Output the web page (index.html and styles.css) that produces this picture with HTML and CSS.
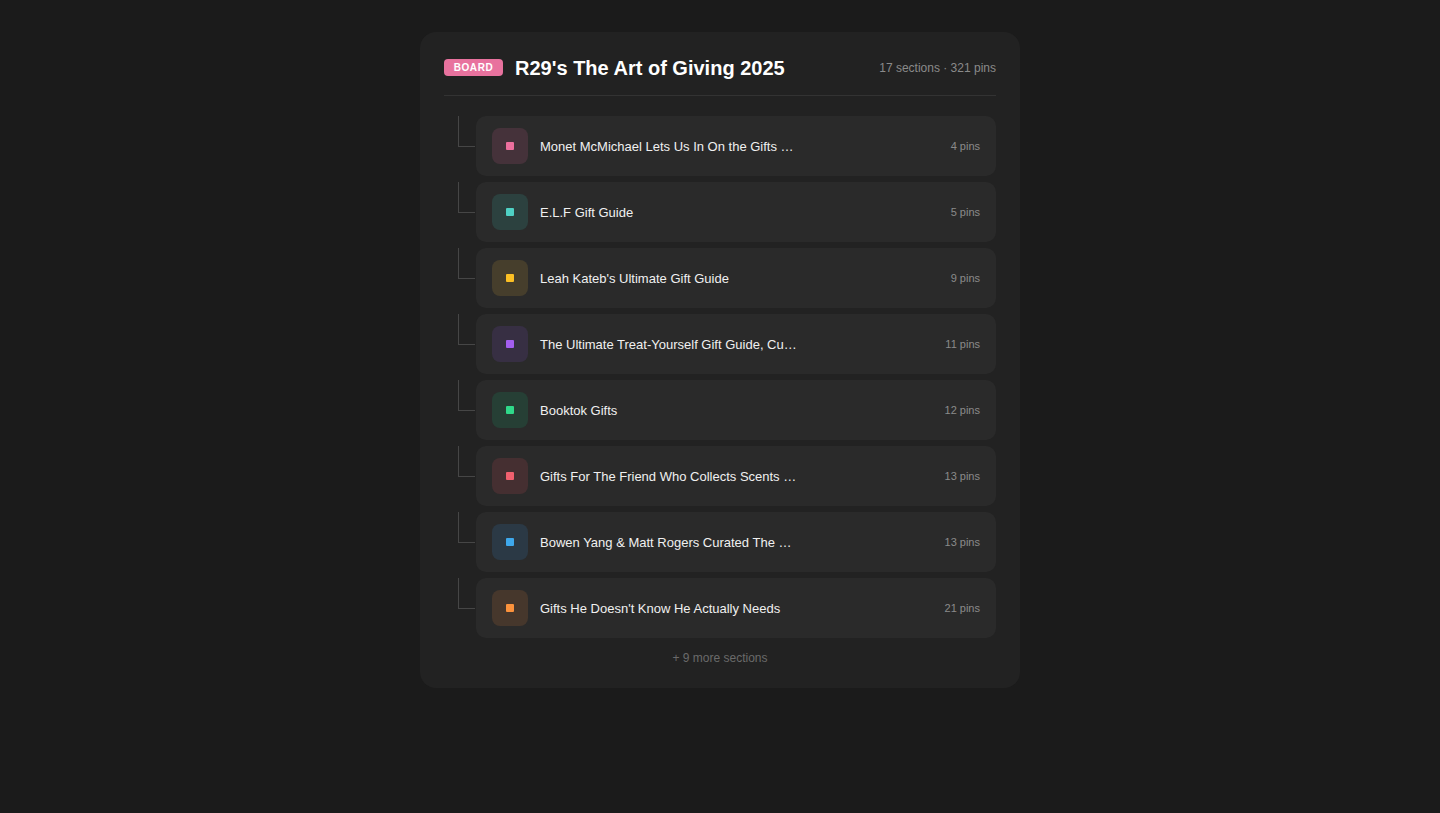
FILE: index.html
```html
<!DOCTYPE html>
<html>
<head>
<meta charset="utf-8">
<link rel="stylesheet" href="styles.css">
</head>
<body>
<div class="page">
  <div class="card">
    <div class="header">
      <span class="badge">BOARD</span>
      <h1 class="title">R29's The Art of Giving 2025</h1>
      <span class="meta">17 sections · 321 pins</span>
    </div>
    <ul class="list">
      <li class="item"><div class="row"><div class="icon pink"><span></span></div><span class="name">Monet McMichael Lets Us In On the Gifts …</span><span class="count">4 pins</span></div></li>
      <li class="item"><div class="row"><div class="icon teal"><span></span></div><span class="name">E.L.F Gift Guide</span><span class="count">5 pins</span></div></li>
      <li class="item"><div class="row"><div class="icon yellow"><span></span></div><span class="name">Leah Kateb's Ultimate Gift Guide</span><span class="count">9 pins</span></div></li>
      <li class="item"><div class="row"><div class="icon purple"><span></span></div><span class="name">The Ultimate Treat-Yourself Gift Guide, Cu…</span><span class="count">11 pins</span></div></li>
      <li class="item"><div class="row"><div class="icon green"><span></span></div><span class="name">Booktok Gifts</span><span class="count">12 pins</span></div></li>
      <li class="item"><div class="row"><div class="icon red"><span></span></div><span class="name">Gifts For The Friend Who Collects Scents …</span><span class="count">13 pins</span></div></li>
      <li class="item"><div class="row"><div class="icon blue"><span></span></div><span class="name">Bowen Yang &amp; Matt Rogers Curated The …</span><span class="count">13 pins</span></div></li>
      <li class="item"><div class="row"><div class="icon orange"><span></span></div><span class="name">Gifts He Doesn't Know He Actually Needs</span><span class="count">21 pins</span></div></li>
    </ul>
    <div class="more">+ 9 more sections</div>
  </div>
</div>
</body>
</html>
```
FILE: styles.css
```css
* { box-sizing: border-box; }
html, body { margin: 0; padding: 0; }
body {
  background: #1b1b1b;
  font-family: "Liberation Sans", Arial, Helvetica, sans-serif;
  color: #fff;
  height: 813px;
}
.page {
  display: flex;
  justify-content: center;
  padding-top: 32px;
}
.card {
  width: 600px;
  background: #222222;
  border-radius: 16px;
  padding: 24px 24px 23px;
}
.header {
  display: flex;
  align-items: center;
  gap: 12px;
  padding-bottom: 15px;
  border-bottom: 1px solid #333333;
}
.badge {
  display: inline-flex;
  align-items: center;
  justify-content: center;
  width: 59px;
  height: 17px;
  margin-top: -1px;
  margin-bottom: 1px;
  background: #e8729e;
  border-radius: 4px;
  font-size: 10px;
  font-weight: 700;
  letter-spacing: 0.6px;
  color: #fff;
}
.title {
  margin: 0;
  font-size: 20px;
  font-weight: 700;
  color: #ffffff;
  flex: 1;
  line-height: 24px;
}
.meta {
  font-size: 12px;
  color: #8a8a8a;
}
.list {
  list-style: none;
  margin: 0;
  padding: 20px 0 0 32px;
  display: flex;
  flex-direction: column;
  gap: 6px;
}
.item {
  position: relative;
}
.item::before {
  content: "";
  position: absolute;
  left: -18px;
  top: 0;
  width: 16px;
  height: 30px;
  border-left: 1px solid #464646;
  border-bottom: 1px solid #464646;
}
.row {
  display: flex;
  align-items: center;
  height: 60px;
  padding: 0 16px;
  background: #2a2a2a;
  border-radius: 10px;
  gap: 12px;
}
.icon {
  width: 36px;
  height: 36px;
  border-radius: 8px;
  display: flex;
  align-items: center;
  justify-content: center;
  flex-shrink: 0;
}
.icon span {
  width: 8px;
  height: 8px;
  border-radius: 1px;
}
.pink { background: #45323a; } .pink span { background: #ec6f9d; }
.teal { background: #2c413f; } .teal span { background: #4fd1c5; }
.yellow { background: #463e2c; } .yellow span { background: #fbbf24; }
.purple { background: #372f43; } .purple span { background: #a45ef0; }
.green { background: #263f35; } .green span { background: #2fd98a; }
.red { background: #452f31; } .red span { background: #f0606e; }
.blue { background: #2b3945; } .blue span { background: #3ea8ec; }
.orange { background: #46372c; } .orange span { background: #fb923c; }
.name {
  flex: 1;
  font-size: 13px;
  color: #f0f0f0;
  white-space: nowrap;
}
.count {
  font-size: 11px;
  color: #8a8a8a;
}
.more {
  text-align: center;
  font-size: 12px;
  color: #6a6a6a;
  padding-top: 13px;
  line-height: 14px;
}
```
